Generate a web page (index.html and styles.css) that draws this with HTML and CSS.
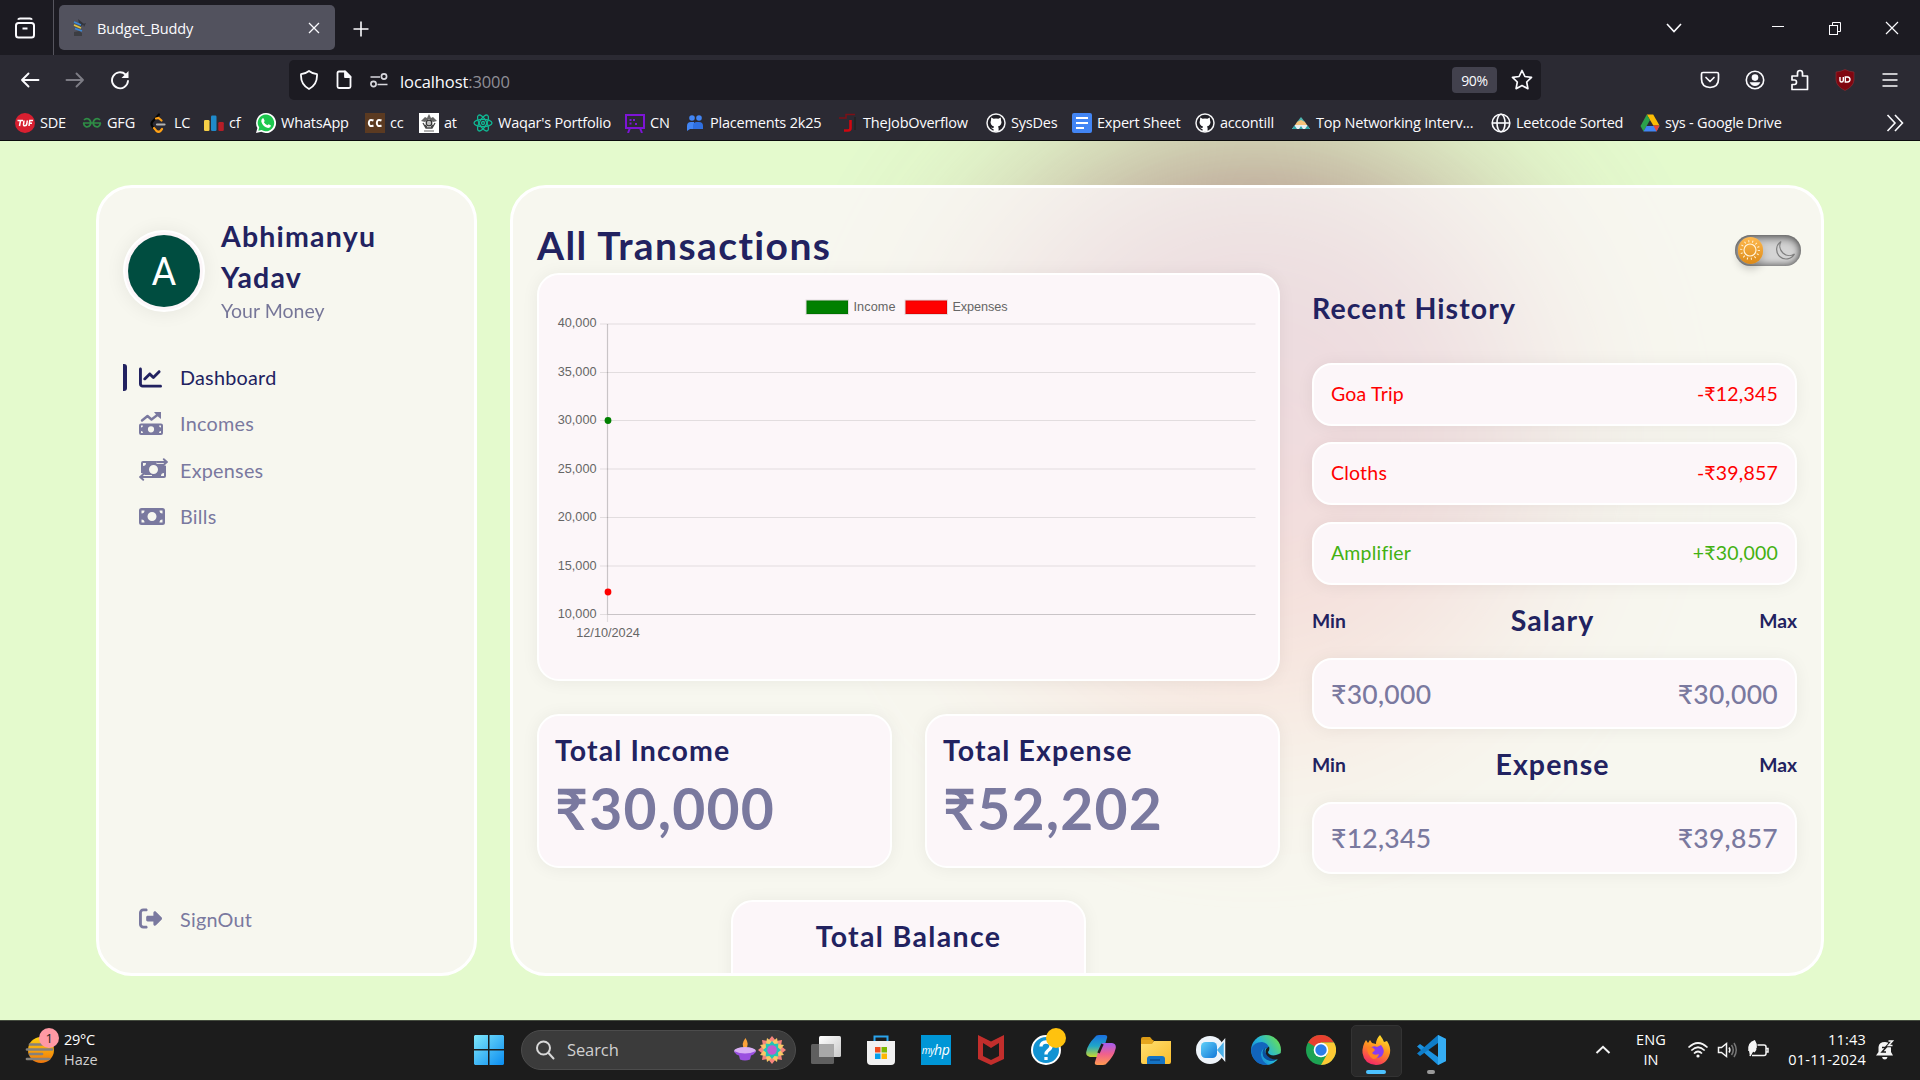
FILE: index.html
```html
<!DOCTYPE html>
<html lang="en">
<head>
<meta charset="utf-8">
<title>Budget_Buddy</title>
<link rel="stylesheet" href="styles.css">
</head>
<body>
<svg class="defs" aria-hidden="true">
  <defs>
    <linearGradient id="gWin" x1="0" y1="0" x2="1" y2="1"><stop offset="0" stop-color="#7ee7fb"/><stop offset="1" stop-color="#0a8cf0"/></linearGradient>
    <linearGradient id="gSun" x1="0" y1="0" x2="0" y2="1"><stop offset="0" stop-color="#fdd010"/><stop offset="1" stop-color="#f0760a"/></linearGradient>
    <linearGradient id="gEdge" x1="0" y1="0.9" x2="1" y2="0.2"><stop offset="0" stop-color="#0f6cc8"/><stop offset="0.5" stop-color="#23b4dc"/><stop offset="1" stop-color="#6be04f"/></linearGradient>
    <linearGradient id="gFox" x1="0.7" y1="0" x2="0.3" y2="1"><stop offset="0" stop-color="#ffe32b"/><stop offset="0.45" stop-color="#ff9020"/><stop offset="1" stop-color="#f5246a"/></linearGradient>
    <linearGradient id="gFolder" x1="0" y1="0" x2="1" y2="1"><stop offset="0" stop-color="#ffdf70"/><stop offset="1" stop-color="#fbbd2c"/></linearGradient>
    <linearGradient id="gCopA" x1="0" y1="0" x2="0" y2="1"><stop offset="0" stop-color="#1a6fe0"/><stop offset="0.5" stop-color="#1fa6c8"/><stop offset="1" stop-color="#c8d82c"/></linearGradient>
    <linearGradient id="gCopB" x1="0" y1="0" x2="0" y2="1"><stop offset="0" stop-color="#a45cf0"/><stop offset="0.5" stop-color="#f0608c"/><stop offset="1" stop-color="#ff9a50"/></linearGradient>
    <linearGradient id="gView" x1="0" y1="0" x2="1" y2="1"><stop offset="0" stop-color="#ffffff"/><stop offset="1" stop-color="#c9c9c9"/></linearGradient>
    <linearGradient id="gCam" x1="0" y1="0" x2="1" y2="1"><stop offset="0" stop-color="#5fd0f8"/><stop offset="1" stop-color="#1277d8"/></linearGradient>
    <g id="github">
      <circle cx="10" cy="10" r="9" fill="#1f1e25" stroke="#f3f3f5" stroke-width="1.500"/>
      <path d="M5.200 4.600 7.600 5.800Q10 5.200 12.400 5.800L14.800 4.600 15 7.200Q16 9 15 11.200 14 13 12 13.400L12.600 15V18.400H7.500V16Q6 16.200 5 14.600 6.600 15.300 7.600 14.800L8 13.400Q6 13 5 11.200 4 9 5 7.200Z" fill="#fff"/>
    </g>
  </defs>
</svg>

<header class="browser">
  <div class="tabbar">
    <div class="view-btn"><svg width="20" height="22" viewBox="0 0 20 22" fill="none" stroke="#fbfbfe" stroke-width="2"><path d="M3 2.600Q3.600 1.400 5 1.400H15Q16.400 1.400 17 2.600" /><rect x="1" y="6" width="18" height="14.500" rx="2.500"/><path d="M7.500 11.500H12.500"/></svg></div>
    <div class="tab">
      <svg width="16" height="20" viewBox="0 0 16 20"><path d="M7 1 13 6 9 9Z" fill="#33353c"/><path d="M12 6 15 5 13 9Z" fill="#33353c"/><path d="M3 4 10 7" stroke="#3b8ad8" stroke-width="1.700"/><path d="M3 7 10 10" stroke="#e7c93d" stroke-width="1.700"/><path d="M4 10.500 11 13" stroke="#3b8ad8" stroke-width="1.700"/><path d="M3 14 8 13 11 15V18H3Z" fill="#3c3d42"/></svg>
      <span class="tab-title">Budget_Buddy</span>
      <svg class="tab-close" width="12" height="12" viewBox="0 0 12 12" stroke="#fbfbfe" stroke-width="1.300"><path d="M1 1 11 11M11 1 1 11"/></svg>
    </div>
    <svg class="plus" width="16" height="16" viewBox="0 0 16 16" stroke="#fbfbfe" stroke-width="1.600"><path d="M8 0.500V15.500M0.500 8H15.500"/></svg>
    <div class="window-btns">
      <svg width="16" height="16" viewBox="0 0 16 16" fill="none" stroke="#fbfbfe" stroke-width="1.600"><path d="M1 4 8 11.500 15 4"/></svg>
      <svg width="14" height="14" viewBox="0 0 14 14" stroke="#fbfbfe"><path d="M1 5.500H13"/></svg>
      <svg width="14" height="14" viewBox="0 0 14 14" fill="none" stroke="#fbfbfe"><rect x="1.500" y="4.500" width="8" height="9"/><path d="M4.500 4.500V1.500H12.500V10.500H9.500"/></svg>
      <svg width="14" height="14" viewBox="0 0 14 14" stroke="#fbfbfe" stroke-width="1.200"><path d="M1 1 13 13M13 1 1 13"/></svg>
    </div>
  </div>

  <div class="navbar">
    <div class="nav-left">
      <svg width="20" height="20" viewBox="0 0 20 20" fill="none" stroke="#fbfbfe" stroke-width="1.900" stroke-linecap="round" stroke-linejoin="round"><path d="M18.500 10H2M8.500 3.500 2 10 8.500 16.500"/></svg>
      <svg width="20" height="20" viewBox="0 0 20 20" fill="none" stroke="#7d7c85" stroke-width="1.900" stroke-linecap="round" stroke-linejoin="round"><path d="M1.500 10H18M11.500 3.500 18 10 11.500 16.500"/></svg>
      <svg width="20" height="20" viewBox="0 0 20 20" fill="none" stroke="#fbfbfe" stroke-width="1.900" stroke-linecap="round"><path d="M18 11A8 8 0 1 1 15.500 4.500"/><path d="M18.500 1V8H11.500Z" fill="#fbfbfe" stroke="none"/></svg>
    </div>
    <div class="urlbar">
      <svg width="20" height="20" viewBox="0 0 20 20" fill="none" stroke="#fbfbfe" stroke-width="1.800" stroke-linejoin="round"><path d="M10 1Q13.500 3.800 18 4.200 18.600 14.500 10 19 1.400 14.500 2 4.200 6.500 3.800 10 1Z"/></svg>
      <svg width="20" height="20" viewBox="0 0 20 20" fill="none" stroke="#fbfbfe" stroke-width="1.800" stroke-linejoin="round"><path d="M11 1.500H5Q3.500 1.500 3.500 3V16.500Q3.500 18 5 18H15Q16.500 18 16.500 16.500V7Z"/><path d="M11 1.500V7H16.500Z" fill="#fbfbfe"/></svg>
      <svg width="20" height="20" viewBox="0 0 20 20" fill="none" stroke="#d8d8de" stroke-width="1.700"><path d="M1.500 7H11M8.500 14.500H18.500"/><circle cx="15" cy="6.500" r="2.600"/><circle cx="4.500" cy="14" r="2.600"/></svg>
      <span class="url">localhost<i>:3000</i></span>
      <span class="zoom">90%</span>
      <svg width="22" height="22" viewBox="0 0 22 22" fill="none" stroke="#fbfbfe" stroke-width="1.700" stroke-linejoin="round"><path d="M11 1.500 13.900 7.500 20.500 8.400 15.700 13 16.900 19.700 11 16.500 5.100 19.700 6.300 13 1.500 8.400 8.100 7.500Z"/></svg>
    </div>
    <div class="nav-right">
      <svg width="20" height="20" viewBox="0 0 20 20" fill="none" stroke="#fbfbfe" stroke-width="1.700" stroke-linecap="round" stroke-linejoin="round"><path d="M3 2.500H17Q18.500 2.500 18.500 4V9Q18.500 17 10 17.500 1.500 17 1.500 9V4Q1.500 2.500 3 2.500Z"/><path d="M6 7.500 10 11.500 14 7.500"/></svg>
      <svg width="20" height="20" viewBox="0 0 20 20"><circle cx="10" cy="10" r="8.700" fill="none" stroke="#fbfbfe" stroke-width="1.600"/><circle cx="10" cy="7.600" r="3.300" fill="#fbfbfe"/><path d="M4.700 12.300H15.300Q14 16 10 16 6 16 4.700 12.300Z" fill="#fbfbfe"/></svg>
      <svg width="20" height="22" viewBox="0 0 20 22" fill="none" stroke="#fbfbfe" stroke-width="1.700" stroke-linejoin="round"><path d="M2 20.500V15.500H4.500Q6.500 15.500 6.500 13.300 6.500 11 4.500 11H2V7H7.500V4Q7.500 1.500 10 1.500 12.500 1.500 12.500 4V7H17.500V20.500Z"/></svg>
      <svg width="20" height="22" viewBox="0 0 20 22"><path d="M10 .5Q14 2.700 19 3V11Q18.500 17.500 10 21.500 1.500 17.500 1 11V3Q6 2.700 10 .5Z" fill="#800610" stroke="#8f3038" stroke-width=".6"/><path d="M5 8V11.500Q5 13 6.500 13 8.300 13 8.300 11.500V8M10.300 8H12.500Q15 8.200 15 10.500 15 12.800 12.500 13H10.300Z" fill="none" stroke="#fff" stroke-width="1.400"/></svg>
      <svg class="menu-btn" width="16" height="18" viewBox="0 0 16 18" stroke="#fbfbfe" stroke-width="1.600"><path d="M.5 3H15.500M.5 9H15.500M.5 15H15.500"/></svg>
    </div>
  </div>

  <nav class="bookmarks">
    <a><svg viewBox="0 0 20 20"><circle cx="10" cy="10" r="10" fill="#d81f30"/><path d="M2.500 7.500H8M5.500 7.500 4.500 13M9 7.500 8.500 11.500Q8.500 13 10 12.700 11.500 12.700 11.800 11L12.300 7.500M14 13 14.800 7.500H18M14.500 10.300H17" stroke="#fff" stroke-width="1.500" fill="none"/></svg><span>SDE</span></a>
    <a><svg viewBox="0 0 20 20" fill="none" stroke="#2f8d46" stroke-width="1.700"><path d="M1 10H19M2 7Q4 5 6.500 6 9.500 8 8.500 11.500 7 14.500 4 13.800 2 13 1.500 10M18 7Q16 5 13.500 6 10.500 8 11.500 11.500 13 14.500 16 13.800 18 13 18.500 10"/></svg><span>GFG</span></a>
    <a><svg viewBox="0 0 20 20" fill="none" stroke-width="2.200" stroke-linecap="round"><path d="M10 1.500 3.500 8.500Q1.500 11 3.500 13.500L6.500 17" stroke="#070707"/><path d="M7 5.500 9.500 5 12.500 7.500M5 15 7.500 18Q9.500 19.500 11.500 18L13 16" stroke="#ffa116"/><path d="M8 11.500H15.500" stroke="#b3b3b3"/></svg><span>LC</span></a>
    <a><svg viewBox="0 0 20 20"><rect y="7" width="5.500" height="11" rx="1.200" fill="#f6cf47"/><rect x="7" y="2.500" width="5.500" height="15.500" rx="1.200" fill="#1f8acb"/><rect x="14.300" y="9" width="5.500" height="9" rx="1.200" fill="#b51d27"/></svg><span>cf</span></a>
    <a><svg viewBox="0 0 20 20"><path d="M10 0A10 10 0 1 1 5.300 18.800L0 20 1.400 15A10 10 0 0 1 10 0Z" fill="#fff"/><path d="M10 1.600A8.300 8.300 0 1 1 5.600 17L2.300 17.700 3.200 14.600A8.300 8.300 0 0 1 10 1.600Z" fill="#1cc74e"/><path d="M6.200 5.500 7.500 5.200 8.700 8 7.900 9.200Q9 11.400 11.400 12.300L12.600 11.200 15 12.600Q14.800 15 12.200 15 7 14 5.300 8.700 5.200 6.500 6.200 5.500Z" fill="#fff"/></svg><span>WhatsApp</span></a>
    <a><svg viewBox="0 0 20 20"><rect width="20" height="20" fill="#5b3a21"/><path d="M8.500 7.500Q4 5.500 3.800 10 4 14.500 8.500 12.500M16.500 7.500Q12 5.500 11.800 10 12 14.500 16.500 12.500" fill="none" stroke="#fff" stroke-width="2"/></svg><span>cc</span></a>
    <a><svg viewBox="0 0 20 20"><rect width="20" height="20" fill="#fff"/><path d="M2 8 6 4 8 5 10 1 12 5 14 4 18 8 14 9 10 6 6 9Z" fill="#666"/><circle cx="10" cy="10" r="2.800" fill="#bbb" stroke="#333" stroke-width="1.200"/><path d="M4 10 7 15H13L16 10M6 12 8 14M14 12 12 14" stroke="#444" stroke-width="1.300" fill="none"/><path d="M5 18H15" stroke="#999" stroke-width="1.500"/></svg><span>at</span></a>
    <a><svg viewBox="0 0 20 20" fill="none" stroke="#10b894" stroke-width="1.300"><ellipse cx="10" cy="10" rx="9" ry="3.600"/><ellipse cx="10" cy="10" rx="9" ry="3.600" transform="rotate(60 10 10)"/><ellipse cx="10" cy="10" rx="9" ry="3.600" transform="rotate(120 10 10)"/><circle cx="10" cy="10" r="1.500"/></svg><span>Waqar's Portfolio</span></a>
    <a><svg viewBox="0 0 20 20" fill="none" stroke="#7d14d6" stroke-width="2"><rect x="1" y="2" width="18" height="13"/><path d="M5 15 3 20M15 15 17 20M4.500 7H6.500M8 7H10M4.500 10.500H6.500M10 11H12" /></svg><span>CN</span></a>
    <a><svg viewBox="0 0 20 20" fill="#4285f4"><circle cx="7" cy="5" r="2.800"/><circle cx="14" cy="5" r="2.800"/><path d="M2 18V13Q2 9 6 9H9V16H5Z"/><path d="M8 16V13Q8 9 12 9H14Q18 9 18 13V16Z" fill="#2f6fe0"/></svg><span>Placements 2k25</span></a>
    <a><svg viewBox="0 0 20 20" fill="none"><path d="M1 5H8V1.500H17" stroke="#7c1017" stroke-width="1.500"/><path d="M12.500 7V15Q12.500 17.500 10 17.500H6" stroke="#d00710" stroke-width="2.600"/><path d="M17 4V17" stroke="#222" stroke-width="1.500"/></svg><span>TheJobOverflow</span></a>
    <a><svg viewBox="0 0 20 20"><use href="#github"/></svg><span>SysDes</span></a>
    <a><svg viewBox="0 0 20 20"><rect width="20" height="20" rx="2" fill="#4285f4"/><path d="M4 5H16M4 10H16M4 15H12" stroke="#fff" stroke-width="2.200"/></svg><span>Expert Sheet</span></a>
    <a><svg viewBox="0 0 20 20"><use href="#github"/></svg><span>accontill</span></a>
    <a><svg viewBox="0 0 20 20"><path d="M10 4 14 9H6Z" fill="#4fb6b0"/><path d="M6 9 10 7 14 9 16 12H4Z" fill="#f6c27a"/><path d="M4 12H16L19 16H1Z" fill="#e8eef0"/><path d="M1 16 3.500 12.500 6 16ZM14 16 16.500 12.500 19 16ZM8 16 10 13 12 16Z" fill="#2fa6a8"/></svg><span>Top Networking Interv...</span></a>
    <a><svg viewBox="0 0 20 20" fill="none" stroke="#fbfbfe" stroke-width="1.600"><circle cx="10" cy="10" r="8.800"/><ellipse cx="10" cy="10" rx="4" ry="8.800"/><path d="M1.500 10H18.500"/></svg><span>Leetcode Sorted</span></a>
    <a><svg viewBox="0 0 20 20"><path d="M6.800 1.500H13.200L19.500 12.500H13.300Z" fill="#fbbc04"/><path d="M6.800 1.500 10 7 3.500 18.500.5 13Z" fill="#2ba24c"/><path d="M6.500 13H19.500L16.500 18.500H3.500Z" fill="#4285f4"/><path d="M13.300 12.500H19.500L16.500 18.500Z" fill="#e94335"/></svg><span>sys - Google Drive</span></a>
    <svg class="more" viewBox="0 0 18 18" fill="none" stroke="#fbfbfe" stroke-width="1.600"><path d="M1.500 1 9 9 1.500 17M9 1 16.500 9 9 17"/></svg>
  </nav>
</header>

<div class="app">
  <div class="orb"></div>
  <aside class="sidebar panel">
    <div class="user">
      <div class="avatar"><span>A</span></div>
      <div>
        <h2>Abhimanyu<br>Yadav</h2>
        <p>Your Money</p>
      </div>
    </div>
    <ul class="menu">
      <li class="active"><svg width="23" height="23" viewBox="0 0 512 512" fill="currentColor"><path d="M64 64c0-17.700-14.300-32-32-32S0 46.300 0 64V400c0 44.200 35.800 80 80 80H480c17.700 0 32-14.300 32-32s-14.300-32-32-32H80c-8.800 0-16-7.200-16-16V64zm406.600 86.600c12.500-12.500 12.500-32.800 0-45.300s-32.800-12.500-45.300 0L320 210.700l-57.400-57.400c-12.500-12.500-32.800-12.500-45.300 0l-112 112c-12.500 12.500-12.500 32.800 0 45.300s32.800 12.500 45.300 0L240 221.300l57.400 57.400c12.500 12.500 32.800 12.500 45.300 0l128-128z"/></svg><span>Dashboard</span></li>
      <li><svg width="24" height="23" viewBox="0 0 24 23" fill="currentColor"><path d="M3 8.500 8.500 4 12.500 7.500 19 2.500" fill="none" stroke="currentColor" stroke-width="2.400" stroke-linecap="round" stroke-linejoin="round"/><path d="M15 0H22V7L19.500 5 17 2.500Z"/><path fill-rule="evenodd" d="M2 11.500H22Q24 11.500 24 13.500V21Q24 23 22 23H2Q0 23 0 21V13.500Q0 11.500 2 11.500ZM12 14.200A3.100 3.100 0 1 0 12 20.400 3.100 3.100 0 1 0 12 14.200ZM2 13.500V15.500Q4 15.500 4 13.500ZM22 13.500V15.500Q20 15.500 20 13.500ZM2 21V19Q4 19 4 21ZM22 21V19Q20 19 20 21Z"/></svg><span>Incomes</span></li>
      <li><svg width="29" height="23" viewBox="0 0 29 23" fill="currentColor"><path fill-rule="evenodd" d="M4 3H18L17 5.500H24L27 7.500V18Q27 20 25 20H12L13 17H6L2 15V5Q2 3 4 3ZM14.500 7A4.500 4.500 0 1 0 14.500 16 4.500 4.500 0 1 0 14.500 7ZM4 5V8Q7 8 7 5ZM25 18V15Q22 15 22 18Z"/><path d="M18 4H27.500M24.800 1.200 27.800 4 24.800 6.800M13 19H1.500M4.200 16.200 1.200 19 4.200 21.800" fill="none" stroke="#f7f6ee" stroke-width="3.600"/><path d="M18 4H27.500M24.800 1.200 27.800 4 24.800 6.800M13 19H1.500M4.200 16.200 1.200 19 4.200 21.800" fill="none" stroke="currentColor" stroke-width="1.900" stroke-linecap="round"/></svg><span>Expenses</span></li>
      <li><svg width="26" height="23" viewBox="0 0 26 23" fill="currentColor"><path fill-rule="evenodd" d="M3 3H23.500Q26 3 26 5.500V17.500Q26 20 23.500 20H2.500Q0 20 0 17.500V5.500Q0 3 2.500 3ZM13 7A4.500 4.500 0 1 0 13 16 4.500 4.500 0 1 0 13 7ZM2.500 5.500V8.500Q5.500 8.500 5.500 5.500ZM23.500 5.500V8.500Q20.500 8.500 20.500 5.500ZM2.500 17.500V14.500Q5.500 14.500 5.500 17.500ZM23.500 17.500V14.500Q20.500 14.500 20.500 17.500Z"/></svg><span>Bills</span></li>
    </ul>
    <div class="signout"><svg width="23" height="23" viewBox="0 0 512 512" fill="currentColor"><path d="M160 96c17.700 0 32-14.300 32-32s-14.300-32-32-32H96C43 32 0 75 0 128V384c0 53 43 96 96 96h64c17.700 0 32-14.300 32-32s-14.300-32-32-32H96c-17.700 0-32-14.300-32-32V128c0-17.700 14.300-32 32-32h64zM377.900 105.900L500.700 228.700c7.200 7.200 11.300 17.100 11.300 27.300s-4.100 20.100-11.300 27.300L377.900 406.100c-6.400 6.400-15 9.900-24 9.900c-18.700 0-33.900-15.200-33.900-33.900V320H192c-17.700 0-32-14.300-32-32V224c0-17.700 14.300-32 32-32H320V129.900c0-18.700 15.200-33.900 33.900-33.900c9 0 17.600 3.600 24 9.900z"/></svg><span>SignOut</span></div>
  </aside>

  <main class="panel content">
    <div class="title-row">
      <h1>All Transactions</h1>
      <div class="toggle">
        <div class="sun"><svg width="22" height="22" viewBox="0 0 22 22" fill="none" stroke="#fff3d8"><circle cx="11" cy="11" r="6" stroke-width="1.200"/><circle cx="11" cy="11" r="8.800" stroke-width="2.200" stroke-dasharray="1 2.950"/></svg></div>
        <svg width="22" height="22" viewBox="0 0 22 22" fill="none" stroke="#808080" stroke-width="1.200"><path d="M7 1.500A9.500 9.500 0 1 0 20.500 14 9.500 9.500 0 0 1 7 1.500Z"/></svg>
      </div>
    </div>
    <div class="columns">
      <section class="left">
        <div class="card chart">
          <svg width="739" height="404" viewBox="539 275 739 404">
            <g class="grid">
              <path d="M600 324H1255.500M600 372.500H1255.500M600 420.500H1255.500M600 469H1255.500M600 517.500H1255.500M600 566H1255.500"/>
              <path class="axis" d="M607.500 614.500H1255.500M607.500 324V614.500"/>
              <path d="M600 614.500H607.500M607.500 614.500V622"/>
            </g>
            <rect x="806.500" y="300.500" width="41.500" height="13.500" fill="green" stroke="rgba(0,0,0,.1)" stroke-width="2"/>
            <rect x="905.500" y="300.500" width="41.500" height="13.500" fill="red" stroke="rgba(0,0,0,.1)" stroke-width="2"/>
            <text x="853.500" y="311" textLength="42">Income</text>
            <text x="952.500" y="311" textLength="55">Expenses</text>
            <g text-anchor="end">
              <text x="596.500" y="327">40,000</text><text x="596.500" y="375.500">35,000</text><text x="596.500" y="424">30,000</text><text x="596.500" y="472.500">25,000</text><text x="596.500" y="521">20,000</text><text x="596.500" y="570">15,000</text><text x="596.500" y="618">10,000</text>
            </g>
            <text x="608" y="636.500" text-anchor="middle">12/10/2024</text>
            <circle cx="608" cy="420.500" r="3.400" fill="green"/>
            <circle cx="608" cy="592" r="3.400" fill="red"/>
          </svg>
        </div>
        <div class="totals">
          <div class="card total"><h2>Total Income</h2><p>₹30,000</p></div>
          <div class="card total"><h2>Total Expense</h2><p>₹52,202</p></div>
        </div>
        <div class="card total balance"><h2>Total Balance</h2></div>
      </section>
      <section class="right">
        <h2 class="history-title">Recent History</h2>
        <div class="history">
          <div class="card item out"><span>Goa Trip</span><span>-₹12,345</span></div>
          <div class="card item out"><span>Cloths</span><span>-₹39,857</span></div>
          <div class="card item in"><span>Amplifier</span><span>+₹30,000</span></div>
        </div>
        <div class="range-title"><b>Min</b><h2>Salary</h2><b>Max</b></div>
        <div class="card range"><span>₹30,000</span><span>₹30,000</span></div>
        <div class="range-title"><b>Min</b><h2>Expense</h2><b>Max</b></div>
        <div class="card range"><span>₹12,345</span><span>₹39,857</span></div>
      </section>
    </div>
  </main>
</div>

<footer class="taskbar">
  <div class="weather">
    <div class="weather-icon">
      <svg width="32" height="30" viewBox="0 0 32 30"><circle cx="17" cy="15" r="13" fill="url(#gSun)"/><path d="M6 9.500H18M3 14.500H28M6 19H18M3 24H25" stroke="#85817b" stroke-width="2.700" stroke-linecap="round"/></svg>
      <span class="badge">1</span>
    </div>
    <div class="weather-text"><span>29°C</span><span>Haze</span></div>
  </div>
  <svg class="start" width="30" height="30" viewBox="0 0 30 30" fill="url(#gWin)"><path d="M1 0H14V14H0V1ZM15.500 0H29L30 1V14H15.500ZM0 15.500H14V30H1L0 29ZM15.500 15.500H30V29L29 30H15.500Z"/></svg>
  <div class="search">
    <svg width="20" height="20" viewBox="0 0 20 20" fill="none" stroke="#d8d8d8" stroke-width="2" stroke-linecap="round"><circle cx="8.500" cy="8" r="6.500"/><path d="M13.500 13 18.500 18.500"/></svg>
    <span>Search</span>
    <svg width="54" height="30" viewBox="0 0 54 30"><path d="M12 14Q7 10 12.500 3 17 10 12.500 14Z" fill="#fba23a"/><ellipse cx="12" cy="16" rx="11" ry="4" fill="#d9b0f5"/><path d="M1 16Q3 20 6 20.500L7 24.500Q12 26.500 17 24.500L18 20.500Q21 20 23 16 12 21 1 16Z" fill="#9a50e0"/><g transform="translate(39 15)"><path d="M0-14 4-9 10-10 9-4 14 0 9 4 10 10 4 9 0 14-4 9-10 10-9 4-14 0-9-4-10-10-4-9Z" fill="#f7857c"/><path d="M5-12 6-6 12-5 8 0 12 5 6 6 5 12 0 8-5 12-6 6-12 5-8 0-12-5-6-6-5-12 0-8Z" fill="#f8c866"/><path d="M0-9 2.500-6 6.400-6.400 6-2.500 9 0 6 2.500 6.400 6.400 2.500 6 0 9-2.500 6-6.400 6.400-6 2.500-9 0-6-2.500-6.400-6.400-2.500-6Z" fill="#22c4b5"/><circle r="4.800" fill="#c05cd0"/></g></svg>
  </div>
  <div class="apps">
    <div><svg viewBox="0 0 30 30"><rect x="8" y="1" width="22" height="21" rx="1.500" fill="url(#gView)"/><rect y="9" width="23" height="20" rx="1.500" fill="#6b6b6b" opacity=".85"/><rect x="8" y="9" width="15" height="13" fill="#a8a8a8"/></svg></div>
    <div><svg viewBox="0 0 30 30"><path d="M8.500 6V1.500H21.500V6" fill="none" stroke="#2aa3ec" stroke-width="2"/><path d="M1 6H29V26Q29 30 25 30H5Q1 30 1 26Z" fill="#f1f1f1"/><path d="M9 12H14.500V17.500H9Z" fill="#f04e1f"/><path d="M15.500 12H21V17.500H15.500Z" fill="#7cb900"/><path d="M9 18.500H14.500V24H9Z" fill="#04a1ec"/><path d="M15.500 18.500H21V24H15.500Z" fill="#fdb700"/></svg></div>
    <div class="myhp">my<b>hp</b></div>
    <div><svg viewBox="0 0 30 30"><path d="M2 0 15 6.500 28 0V24L15 30 2 24ZM7 8V21L15 25 23 21V8L15 13Z" fill="#c22e2c" fill-rule="evenodd"/></svg></div>
    <div><svg viewBox="0 0 30 30"><circle cx="15" cy="15" r="14" fill="#1293d3" stroke="#fff" stroke-width="2"/><path d="M10 11.500Q10 7 15 7 20 7 20 11 20 13.500 17 15.500 15 17 15 19.500M15 22V25" fill="none" stroke="#fff" stroke-width="3.300"/></svg><i class="alert"></i></div>
    <div><svg viewBox="0 0 30 30"><path d="M9 2Q10 0 13 0H19Q22 0 21 3L16 19Q15 22 12 22H4Q-1 21 .5 16Q2 9 9 2Z" fill="url(#gCopA)"/><path d="M21 28Q20 30 17 30H11Q8 30 9 27L14 11Q15 8 18 8H26Q31 9 29.500 14Q28 21 21 28Z" fill="url(#gCopB)"/><path d="M12.500 18 16.500 9" stroke="#1c1c1c" stroke-width="2.500"/></svg></div>
    <div><svg viewBox="0 0 30 30"><path d="M0 4Q0 2 2 2H9L12 5.500H0Z" fill="#dc9b16"/><path d="M0 8H11L13 6H30V27Q30 29 28 29H2Q0 29 0 27Z" fill="url(#gFolder)"/><path d="M0 8V5H12L13 6 11 9H0Z" fill="#e5a61f"/><path d="M6 29V24Q6 21 9 21H21Q24 21 24 24V29Z" fill="#1573c4"/><path d="M9 25H19" stroke="#0b4d90" stroke-width="1.500"/></svg></div>
    <div><svg viewBox="0 0 30 30"><circle cx="14" cy="15" r="14" fill="#eef4fa"/><path d="M20 15 28.500 5V25Z" fill="#4bb0e8" stroke="#eef4fa" stroke-width="1.500"/><rect x="5" y="7" width="16" height="16" rx="4.500" fill="url(#gCam)"/></svg></div>
    <div><svg viewBox="0 0 30 30"><circle cx="15" cy="15" r="15" fill="url(#gEdge)"/><path d="M.3 14Q3 7 11 7 17 8 18 13 10 12 10 20 11 27 17 29.800 8 31 3 24 0 19 .3 14Z" fill="#1265bd"/><path d="M18 12Q13 12 14 17 16 21 22 21L29 18.500Q26 27 19 26 11 24 11.500 17 12 12 18 12Z" fill="#0b4f9c"/><path d="M18 11.500Q19 15 17 17 17 20 23 20.500 28 20 31 17L31 23Q25 26 19 23 13 19 15 14Z" fill="#1c1c1c"/></svg></div>
    <div><svg viewBox="0 0 30 30"><circle cx="15" cy="15" r="15" fill="#1da353"/><path d="M15 15 2 7.500A15 15 0 0 1 28 7.500H15Z" fill="#e8402f"/><path d="M28 7.500A15 15 0 0 1 15 30L21.500 18.500 15 7.500Z" fill="#fcc934"/><circle cx="15" cy="15" r="7.300" fill="#fff"/><circle cx="15" cy="15" r="5.700" fill="#2b7de9"/></svg></div>
    <div class="current"><svg viewBox="0 0 30 30"><path d="M19 0Q22 4 23 7L26 6Q30 12 29 18 26 30 15 30 3 29 1.500 18 1 11 5 5L7 8 9 5 11 8 15 9Q15 4 19 0Z" fill="url(#gFox)"/><path d="M9 13Q13 10 16 12L20 10Q25 16 21 21 16 25 11 21 8 17 9 13Z" fill="#8a3cf0"/><path d="M6 12Q11 11 14 15L11 18Q13 21 18 19 17 24 12 24 6 20 6 12Z" fill="#ff8420"/></svg><i class="bar"></i></div>
    <div><svg viewBox="0 0 30 30"><path d="M22 0 30 4V26L22 30 1 11.500 4 9 22 22Z" fill="#1b92e0"/><path d="M22 0 1 18.500 4 21 22 8Z" fill="#0f7dc9"/><path d="M22 0 30 4V26L22 30Z" fill="#35adf3"/></svg><i class="dot"></i></div>
  </div>
  <div class="tray">
    <svg class="up" width="16" height="10" viewBox="0 0 16 10" fill="none" stroke="#f4f4f4" stroke-width="2"><path d="M1.500 8 8 1.800 14.500 8"/></svg>
    <div class="lang"><span>ENG</span><span>IN</span></div>
    <div class="status">
      <svg width="22" height="20" viewBox="0 0 22 20" fill="none" stroke="#f4f4f4" stroke-width="1.700"><path d="M1.500 7.500Q11-1.500 20.500 7.500M4.300 10.500Q11 4 17.700 10.500M7 13.500Q11 9.500 15 13.500"/><circle cx="11" cy="16" r="1.600" fill="#f4f4f4" stroke="none"/></svg>
      <svg width="22" height="20" viewBox="0 0 22 20" fill="none" stroke="#f4f4f4" stroke-width="1.500"><path d="M1.500 7.500H4.500L9.500 3.500V16.500L4.500 12.500H1.500Z"/><path d="M12 7.500Q13.800 10 12 12.500"/><path d="M14.500 5Q18 10 14.500 15M17 3Q21.500 10 17 17" stroke="#777"/></svg>
      <svg width="22" height="20" viewBox="0 0 22 20" fill="none" stroke="#f4f4f4" stroke-width="1.500"><path d="M10.500 5H17Q19 5 19 7V13.500Q19 15.500 17 15.500H5M19 8.500H21V12H19"/><path d="M2 11Q1 3 7.500 1 12 8 5 12L3 16M9 9 7 12Z" fill="#f4f4f4"/></svg>
    </div>
    <div class="clock"><span>11:43</span><span>01-11-2024</span></div>
    <svg class="bell" width="20" height="22" viewBox="0 0 20 22"><path d="M3.500 8Q4 3 10 3 16 3 16 9V13L18 16.500H1L3.500 13Z" fill="#f4f4f4"/><path d="M7 18H12.500Q12 20.500 9.800 20.500 7.500 20.500 7 18Z" fill="#f4f4f4"/><path d="M7 8.500H11L7 13H11" stroke="#1c1c1c" stroke-width="1.500" fill="none"/><path d="M13.500 2H17.500L13.500 6.500H17.500" stroke="#1c1c1c" stroke-width="3.500" fill="none"/><path d="M13.500 2H17.500L13.500 6.500H17.500" stroke="#f4f4f4" stroke-width="1.500" fill="none"/></svg>
  </div>
</footer>
</body>
</html>
```
FILE: styles.css
```css
* { box-sizing: border-box; margin: 0; padding: 0; }
body {
  width: 1920px;
  height: 1080px;
  overflow: hidden;
  display: flex;
  flex-direction: column;
  font-family: Lato, "Noto Sans", sans-serif;
  color: #222260;
}
svg { display: block; flex: none; }
.defs { position: absolute; width: 0; height: 0; }
h1, h2 { font-weight: 700; white-space: nowrap; }
ul { list-style: none; }
i { font-style: normal; }
span { white-space: nowrap; }

/* browser chrome */
.browser {
  height: 141px;
  flex: none;
  background: #2b2a33;
  border-bottom: 1px solid #0c0c0d;
  font-family: "Open Sans", "Noto Sans", sans-serif;
  color: #fbfbfe;
}
.tabbar { height: 55px; display: flex; align-items: center; background: #1c1b22; }
.view-btn { width: 54px; height: 55px; padding: 17px 0 0 15px; border-right: 1px solid #56555e; }
.tab {
  width: 276px;
  height: 45px;
  margin-left: 5px;
  padding: 0 15px 0 12px;
  display: flex;
  align-items: center;
  gap: 10px;
  background: #52525e;
  border-radius: 5px;
}
.tab-title { margin-top: 2px; font-size: 14.5px; letter-spacing: -0.15px; }
.tab-close { margin-left: auto; }
.plus { margin: 2px 0 0 18px; }
.window-btns { margin-left: auto; margin-right: 21px; display: grid; grid-template-columns: 105px 57px 57px 14px; align-items: center; }

.navbar { height: 50px; display: flex; align-items: center; }
.nav-left { width: 289px; padding-left: 20px; display: flex; gap: 25px; }
.urlbar {
  width: 1252px;
  height: 40px;
  padding: 0 8px 0 10px;
  display: flex;
  align-items: center;
  gap: 15px;
  background: #1c1b22;
  border-radius: 5px;
}
.url { margin-left: -4px; margin-top: 3px; font-size: 16.5px; letter-spacing: -0.1px; }
.url i { color: #8f8e96; }
.zoom {
  width: 45px;
  height: 26px;
  margin-left: auto;
  margin-right: -1px;
  background: #42414d;
  border-radius: 4px;
  text-align: center;
  font-size: 14px;
  line-height: 27px;
  letter-spacing: -0.3px;
}
.nav-right { margin-left: auto; margin-right: 22px; display: flex; align-items: center; gap: 25px; }
.menu-btn { margin-left: 2px; }

.bookmarks {
  height: 35px;
  padding-left: 15px;
  display: grid;
  grid-template-columns: 67px 67px 55px 52px 109px 54px 54px 152px 60px 153px 148px 86px 123px 96px 200px 149px 246px 20px;
  align-items: center;
}
.bookmarks a { display: flex; align-items: center; gap: 5px; font-size: 14.5px; letter-spacing: -0.2px; line-height: 20px; }
.bookmarks a span { margin-top: 1px; }
.bookmarks a svg { width: 20px; height: 20px; }
.bookmarks .more { width: 18px; height: 18px; }

/* application */
.app {
  position: relative;
  height: 879px;
  flex: none;
  padding: 44px 96px;
  display: flex;
  gap: 33px;
  background: #e4facd;
  overflow: hidden;
}
.orb {
  position: absolute;
  left: 975px;
  top: 15px;
  width: 560px;
  height: 580px;
  border-radius: 50%;
  background: linear-gradient(180deg, #966c6c 0%, #b3607a 42%, #f0904e 100%);
  filter: blur(95px);
  opacity: 0.85;
}
.panel {
  position: relative;
  height: 791px;
  border: 3px solid #fff;
  border-radius: 36px;
  background: rgba(252, 246, 249, 0.78);
  overflow: hidden;
}
.sidebar { width: 381px; padding: 29px 24px 0; display: flex; flex-direction: column; }
.user { display: flex; gap: 16px; }
.avatar {
  width: 82px;
  height: 82px;
  margin-top: 13px;
  padding: 3px;
  border: 2px solid #fff;
  border-radius: 50%;
  background: #fcf6f9;
  box-shadow: 0 1px 19px rgba(0, 0, 0, 0.07);
}
.avatar span {
  display: block;
  width: 72px;
  height: 72px;
  border-radius: 50%;
  background: #004d40;
  color: #fff;
  font: 38px/74px Roboto, sans-serif;
  text-align: center;
}
.user h2 { font-size: 28.5px; line-height: 41px; letter-spacing: 1.2px; margin-top: -1px; }
.user p { font-size: 19.5px; line-height: 28px; opacity: 0.6; margin-top: -1px; letter-spacing: 0; }
.menu { margin-top: 29px; }
.menu li, .signout {
  height: 46.3px;
  display: grid;
  grid-template-columns: 41px auto;
  align-items: center;
  padding-left: 16px;
  font-size: 19.8px;
  letter-spacing: 0.25px;
  color: #7a799f;
}
.menu li.active { position: relative; color: #222260; }
.menu li.active::before { content: ""; position: absolute; left: 0; top: 10px; width: 4px; height: 27px; background: #222260; border-radius: 0 3px 3px 0; }
.signout { margin-top: auto; margin-bottom: 31px; }

.content { width: 1314px; padding: 32px 24px 0; }
.title-row { height: 50px; display: flex; justify-content: space-between; }
.title-row h1 { font-size: 39px; line-height: 50px; letter-spacing: 1.4px; }
.toggle {
  width: 66px;
  height: 31px;
  margin: 15px -4px 0 0;
  padding: 2px 5px 2px 3px;
  display: flex;
  align-items: center;
  justify-content: space-between;
  border-radius: 16px;
  background: #d4d4d4;
  box-shadow: inset 0 3px 9px rgba(0, 0, 0, 0.55), inset 0 -2px 6px rgba(0, 0, 0, 0.35);
}
.sun { width: 25px; height: 27px; padding: 2px 1px; border-radius: 13px; background: linear-gradient(180deg, #ffb94f, #dc8a18); box-shadow: 0 5px 9px rgba(0, 0, 0, 0.2); }
.columns { margin-top: 3px; display: grid; grid-template-columns: 743px 485px; gap: 32px; }
.card {
  border: 2px solid #fff;
  border-radius: 22px;
  background: #fcf6f9;
  box-shadow: 0 1px 17px rgba(0, 0, 0, 0.06);
}
.left { display: flex; flex-direction: column; }
.chart { height: 408px; }
.chart text { font: 12.7px "Liberation Sans", Arial, sans-serif; fill: #666; }
.grid { fill: none; stroke: rgba(0, 0, 0, 0.1); stroke-width: 1.2; }
.grid .axis { stroke: rgba(0, 0, 0, 0.2); }
.totals { margin-top: 33px; display: flex; justify-content: space-between; }
.total { width: 355px; height: 154px; padding: 17px 16px; }
.total h2 { font-size: 28.5px; line-height: 34px; letter-spacing: 1.1px; }
.total p { margin-top: 9px; font-size: 57px; line-height: 64px; letter-spacing: 1.2px; font-weight: 700; color: #7a799f; white-space: nowrap; }
.balance { margin: 32px auto 0; text-align: center; }
.balance h2 { letter-spacing: 1.35px; }
.right { padding-top: 18px; }
.right h2 { font-size: 28.5px; line-height: 34px; letter-spacing: 1.1px; }
.history { margin-top: 38px; display: flex; flex-direction: column; gap: 16px; }
.item, .range { display: flex; justify-content: space-between; align-items: center; padding: 0 17px; border-radius: 20px; }
.item { height: 63px; padding-bottom: 2px; font-size: 19.5px; letter-spacing: 0.2px; }
.item.in { margin-top: 1px; }
.out { color: #ff0000; }
.in { color: #43b112; }
.range-title { margin: 18px 0 21px; display: flex; justify-content: space-between; align-items: center; }
.range-title b { margin-top: 1px; font-size: 19.3px; }
.range { height: 71px; font-size: 26.5px; letter-spacing: 0.3px; color: #7a799f; font-weight: 500; }
.range:last-child { height: 72px; }

/* taskbar */
.taskbar {
  height: 60px;
  flex: none;
  padding-bottom: 2px;
  display: flex;
  align-items: center;
  background: #1c1c1c;
  border-top: 1px solid #444b3e;
  color: #fff;
  font: 14.5px/20px "Open Sans", "Noto Sans", sans-serif;
  letter-spacing: -0.3px;
}
.weather { width: 474px; padding-left: 24px; display: flex; gap: 8px; }
.weather-icon { position: relative; padding-top: 5px; }
.badge { position: absolute; left: 15px; top: -2px; width: 20px; height: 20px; border-radius: 50%; background: #ff99a4; color: #222; text-align: center; font-size: 13px; }
.weather-text, .lang, .clock { display: flex; flex-direction: column; }
.weather-text span:last-child { color: #d0d0d0; letter-spacing: 0; }
.search {
  width: 275px;
  height: 40px;
  margin-left: 17px;
  padding: 0 8px 0 13px;
  display: flex;
  align-items: center;
  background: #3b3b3b;
  border: 1px solid #4c4c4c;
  border-radius: 20px;
}
.search span { margin-left: 12px; font-size: 16.5px; color: #d0d0d0; margin-right: auto; letter-spacing: -0.1px; }
.apps { margin-left: 2px; display: flex; }
.apps > div { position: relative; width: 55px; height: 50px; display: flex; align-items: center; justify-content: center; }
.apps svg { width: 30px; height: 30px; }
.apps .myhp { width: 30px; height: 30px; margin: 10px 12.5px; background: #0096d6; font-size: 10px; font-style: italic; letter-spacing: -0.5px; }
.myhp b { font-size: 14px; font-weight: 400; }
.alert { position: absolute; right: 7px; top: 3px; width: 20px; height: 20px; border-radius: 50%; background: #ffc20e; }
.apps .current::before { content: ""; position: absolute; left: 3px; top: 0; width: 49px; height: 50px; border-radius: 5px; background: #292929; border: 1px solid #333; }
.current svg { position: relative; }
.bar, .dot { position: absolute; bottom: 1px; height: 4px; border-radius: 2px; }
.bar { width: 20px; background: #4cc2ff; }
.dot { width: 8px; background: #9a9a9a; }
.tray { margin-left: auto; margin-right: 25px; display: flex; align-items: center; }
.up { margin-right: 25px; }
.lang { align-items: center; width: 30px; margin-right: 21px; letter-spacing: 0.1px; }
.status { display: flex; gap: 8px; width: 82px; margin-right: 17px; }
.clock { width: 80px; align-items: flex-end; margin-right: 9px; letter-spacing: 0.2px; }
```
